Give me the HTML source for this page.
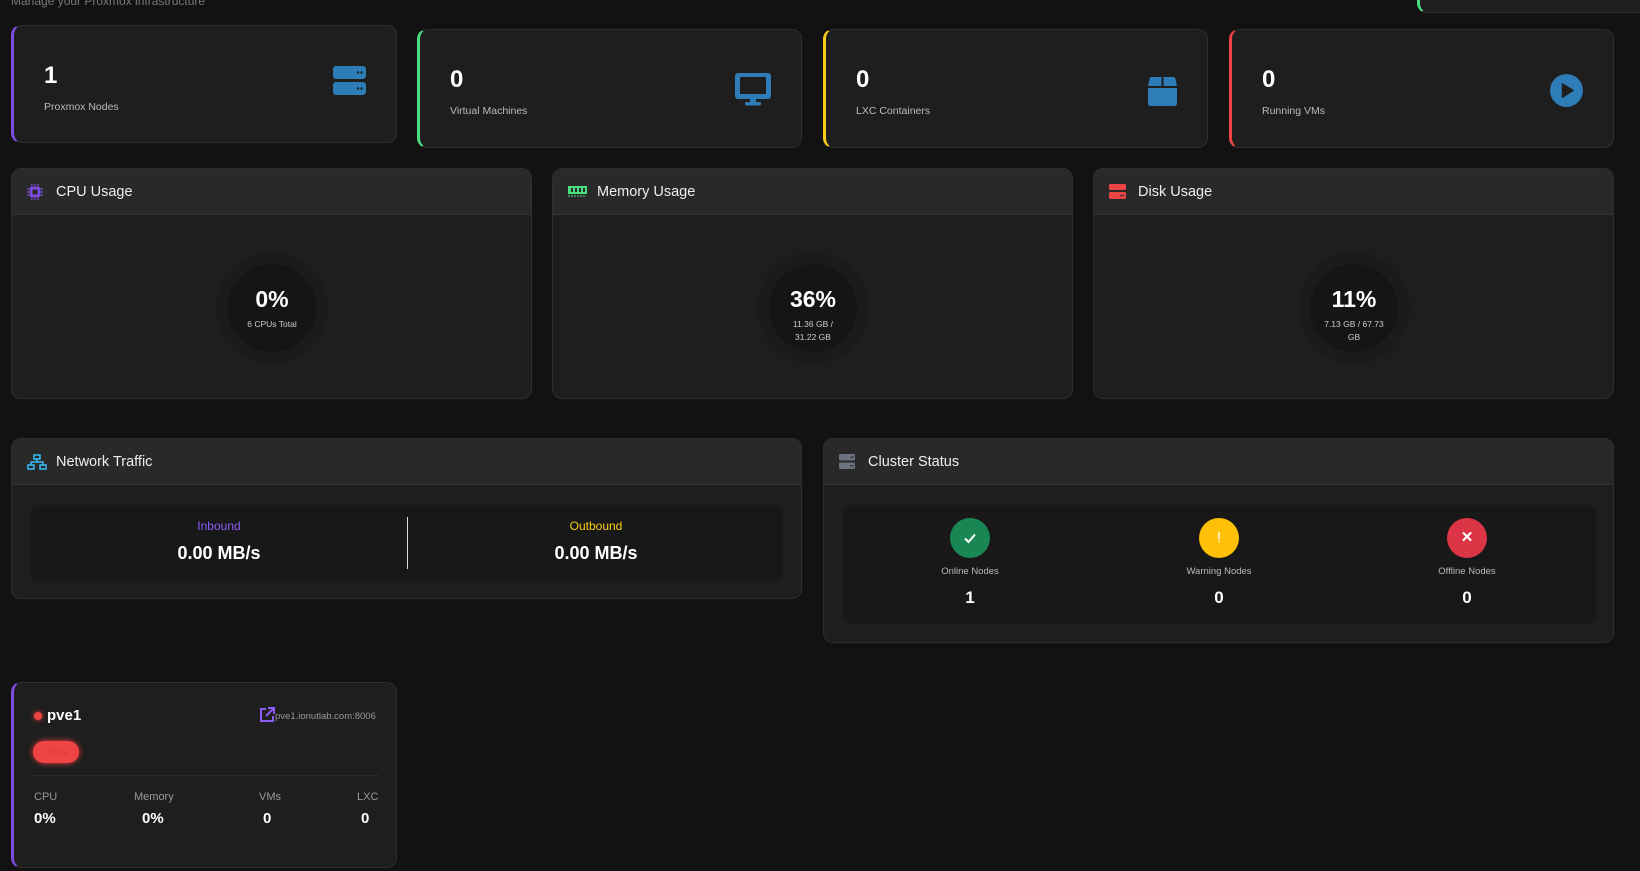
<!DOCTYPE html>
<html><head><meta charset="utf-8"><style>
*{box-sizing:border-box;margin:0;padding:0}
body{width:1640px;height:871px;background:#121212;font-family:"Liberation Sans",sans-serif;color:#fff;position:relative;overflow:hidden}
.a{position:absolute}
.card{position:absolute;background:#1e1e1e;border:1px solid #2e2e2e;border-radius:10px;overflow:hidden}
.stat .num{position:absolute;left:30px;font-size:24px;font-weight:bold}
.stat .lbl{position:absolute;left:30px;font-size:10.5px;color:#bbb}
.stat .ic{position:absolute;right:30px}
.hd{position:absolute;left:0;right:0;top:0;height:46px;background:#292929;border-bottom:1px solid #333}
.hd span{position:absolute;left:44px;top:15px;font-size:14.5px;color:#eee}
.hd svg{position:absolute;left:15px;top:15px}
.ring{position:absolute;width:88px;height:88px;border-radius:50%;background:#151515;box-shadow:0 0 0 12px #1b1b1b;text-align:center}
.ring b{display:block;margin-top:22px;font-size:23px}
.ring i{display:block;font-style:normal;font-size:8.5px;color:#ccc;margin-top:5px;line-height:13px;padding:0 6px}
.cc{position:absolute;width:40px;height:40px;border-radius:50%;text-align:center;line-height:40px;font-size:15px;font-weight:bold}
.cl{position:absolute;width:160px;text-align:center;font-size:9.5px;color:#bbb}
.cv{position:absolute;width:160px;text-align:center;font-size:17px;font-weight:bold}
.nl{position:absolute;font-size:11px;color:#999}
.nv{position:absolute;font-size:15px;font-weight:bold}
</style></head><body>
<div class="a" style="left:11px;top:-6px;font-size:12px;color:#777">Manage your Proxmox infrastructure</div>
<div class="card" style="left:1417px;top:-10px;width:240px;height:23px;border-left:3px solid #4ade80"></div>

<div class="card stat" style="left:11px;top:25px;width:386px;height:118px;border-left:3px solid #7c4ddf">
<div class="num" style="top:36px">1</div><div class="lbl" style="top:75px">Proxmox Nodes</div>
<svg class="ic" style="top:40px" width="33" height="30" viewBox="0 0 33 30"><rect x="0" y="0" width="33" height="13" rx="3" fill="#2e7cb8"/><rect x="0" y="16" width="33" height="13" rx="3" fill="#2e7cb8"/><circle cx="25" cy="6.5" r="1.2" fill="#1e1e1e"/><circle cx="28.5" cy="6.5" r="1.2" fill="#1e1e1e"/><circle cx="25" cy="22.5" r="1.2" fill="#1e1e1e"/><circle cx="28.5" cy="22.5" r="1.2" fill="#1e1e1e"/></svg>
</div>
<div class="card stat" style="left:417px;top:29px;width:385px;height:119px;border-left:3px solid #4ade80">
<div class="num" style="top:36px">0</div><div class="lbl" style="top:75px">Virtual Machines</div>
<svg class="ic" style="top:43px" width="36" height="33" viewBox="0 0 36 33"><rect x="0" y="0" width="36" height="26" rx="3" fill="#2e7cb8"/><rect x="5" y="4" width="26" height="17" fill="#1e1e1e"/><rect x="15" y="26" width="6" height="3" fill="#2e7cb8"/><rect x="10" y="29" width="16" height="3.5" rx="1.5" fill="#2e7cb8"/></svg>
</div>
<div class="card stat" style="left:823px;top:29px;width:385px;height:119px;border-left:3px solid #facc15">
<div class="num" style="top:36px">0</div><div class="lbl" style="top:75px">LXC Containers</div>
<svg class="ic" style="top:47px" width="29" height="29" viewBox="0 0 29 29"><path d="M4 0H13.5V9H0L1.5 2Q2 0 4 0Z M15.5 0H25Q27 0 27.5 2L29 9H15.5Z M0 11H29V26Q29 29 26 29H3Q0 29 0 26Z" fill="#2e7cb8"/></svg>
</div>
<div class="card stat" style="left:1229px;top:29px;width:385px;height:119px;border-left:3px solid #ef4444">
<div class="num" style="top:36px">0</div><div class="lbl" style="top:75px">Running VMs</div>
<svg class="ic" style="top:44px" width="33" height="33" viewBox="0 0 33 33"><circle cx="16.5" cy="16.5" r="16.5" fill="#2e7cb8"/><path d="M12.5 10L23 16.5L12.5 23Z" fill="#1e1e1e" stroke="#1e1e1e" stroke-width="1.5" stroke-linejoin="round"/></svg>
</div>

<div class="card" style="left:11px;top:168px;width:521px;height:231px">
<div class="hd"><svg width="16" height="16" viewBox="0 0 16 16"><rect x="3" y="3" width="10" height="10" rx="1" fill="#7c4ddf"/><rect x="5.5" y="5.5" width="5" height="5" fill="#2a2a2a"/><path d="M5 0v3M8 0v3M11 0v3M5 13v3M8 13v3M11 13v3M0 5h3M0 8h3M0 11h3M13 5h3M13 8h3M13 11h3" stroke="#7c4ddf" stroke-width="1.2"/></svg><span>CPU Usage</span></div>
<div class="ring" style="left:216px;top:95px"><b>0%</b><i>6 CPUs Total</i></div>
</div>
<div class="card" style="left:552px;top:168px;width:521px;height:231px">
<div class="hd"><svg width="19" height="14" viewBox="0 0 19 14"><rect x="0" y="2" width="19" height="8" fill="#4ade80"/><rect x="3" y="4" width="2" height="4" fill="#2a2a2a"/><rect x="7" y="4" width="2" height="4" fill="#2a2a2a"/><rect x="11" y="4" width="2" height="4" fill="#2a2a2a"/><rect x="15" y="4" width="2" height="4" fill="#2a2a2a"/><path d="M1 11v2M4 11v2M7 11v2M10 11v2M13 11v2M16 11v2" stroke="#4ade80"/></svg><span>Memory Usage</span></div>
<div class="ring" style="left:216px;top:95px"><b>36%</b><i>11.36 GB /<br>31.22 GB</i></div>
</div>
<div class="card" style="left:1093px;top:168px;width:521px;height:231px">
<div class="hd"><svg width="17" height="15" viewBox="0 0 17 15"><rect x="0" y="0" width="17" height="6" rx="1.5" fill="#ef4444"/><rect x="0" y="8" width="17" height="7" rx="1.5" fill="#ef4444"/><circle cx="12" cy="11.5" r=".9" fill="#2a2a2a"/><circle cx="14.3" cy="11.5" r=".9" fill="#2a2a2a"/></svg><span>Disk Usage</span></div>
<div class="ring" style="left:216px;top:95px"><b>11%</b><i>7.13 GB / 67.73<br>GB</i></div>
</div>

<div class="card" style="left:11px;top:438px;width:791px;height:161px">
<div class="hd"><svg width="20" height="16" viewBox="0 0 20 16" fill="none" stroke="#38bdf8" stroke-width="1.5"><rect x="7" y="1" width="6" height="4"/><rect x="1" y="11" width="6" height="4"/><rect x="13" y="11" width="6" height="4"/><path d="M10 5v3M4 11V8h12v3"/></svg><span>Network Traffic</span></div>
<div class="a" style="left:19px;top:66px;width:752px;height:76px;background:#181818;border-radius:8px">
<div class="a" style="left:0;width:376px;top:14px;text-align:center;font-size:12px;color:#8b5cf6">Inbound</div>
<div class="a" style="left:0;width:376px;top:38px;text-align:center;font-size:18px;font-weight:bold">0.00 MB/s</div>
<div class="a" style="left:376px;top:12px;width:1px;height:52px;background:#ddd"></div>
<div class="a" style="left:377px;width:376px;top:14px;text-align:center;font-size:12px;color:#facc15">Outbound</div>
<div class="a" style="left:377px;width:376px;top:38px;text-align:center;font-size:18px;font-weight:bold">0.00 MB/s</div>
</div>
</div>

<div class="card" style="left:823px;top:438px;width:791px;height:205px">
<div class="hd"><svg width="16" height="15" viewBox="0 0 16 15"><rect x="0" y="0" width="16" height="6.5" rx="1.5" fill="#6b7280"/><rect x="0" y="8.5" width="16" height="6.5" rx="1.5" fill="#6b7280"/><circle cx="12" cy="3.2" r=".8" fill="#2a2a2a"/><circle cx="14" cy="3.2" r=".8" fill="#2a2a2a"/><circle cx="12" cy="11.7" r=".8" fill="#2a2a2a"/><circle cx="14" cy="11.7" r=".8" fill="#2a2a2a"/></svg><span>Cluster Status</span></div>
<div class="a" style="left:19px;top:66px;width:753px;height:119px;background:#181818;border-radius:8px">
<div class="cc" style="left:107px;top:13px;background:#198754"><svg width="14" height="14" viewBox="0 0 14 14" style="margin-top:13px"><path d="M2 7.5L5.5 11L12 3.5" fill="none" stroke="#fff" stroke-width="2"/></svg></div>
<div class="cc" style="left:356px;top:13px;background:#ffc107;font-weight:normal">!</div>
<div class="cc" style="left:604px;top:13px;background:#dc3545">✕</div>
<div class="cl" style="left:47px;top:61px">Online Nodes</div><div class="cv" style="left:47px;top:83px">1</div>
<div class="cl" style="left:296px;top:61px">Warning Nodes</div><div class="cv" style="left:296px;top:83px">0</div>
<div class="cl" style="left:544px;top:61px">Offline Nodes</div><div class="cv" style="left:544px;top:83px">0</div>
</div>
</div>

<div class="card" style="left:11px;top:682px;width:386px;height:186px;border-left:3px solid #7c4ddf">
<div class="a" style="left:20px;top:29px;width:8px;height:8px;border-radius:50%;background:#ef4444;box-shadow:0 0 5px #ef4444"></div>
<div class="a" style="left:33px;top:24px;font-size:15px;font-weight:bold">pve1</div>
<svg class="a" style="left:245px;top:24px" width="16" height="16" viewBox="0 0 16 16" fill="none" stroke="#8b5cf6" stroke-width="2"><path d="M7 2H2v12h12V9M9 1h6v6M15 1L7 9"/></svg>
<div class="a" style="left:261px;top:28px;font-size:9.5px;color:#999">pve1.ionutlab.com:8006</div>
<div class="a" style="left:19px;top:58px;width:46px;height:22px;border-radius:11px;background:#ef4444;box-shadow:0 0 6px #ef4444;font-size:9px;color:#e03a3a;text-align:center;line-height:22px">Offline</div>
<div class="a" style="left:19px;top:92px;width:346px;height:1px;background:#2c2c2c"></div>
<div class="nl" style="left:20px;top:108px">CPU</div><div class="nv" style="left:20px;top:127px">0%</div>
<div class="nl" style="left:120px;top:108px">Memory</div><div class="nv" style="left:128px;top:127px">0%</div>
<div class="nl" style="left:245px;top:108px">VMs</div><div class="nv" style="left:249px;top:127px">0</div>
<div class="nl" style="left:343px;top:108px">LXC</div><div class="nv" style="left:347px;top:127px">0</div>
</div>
</body></html>
